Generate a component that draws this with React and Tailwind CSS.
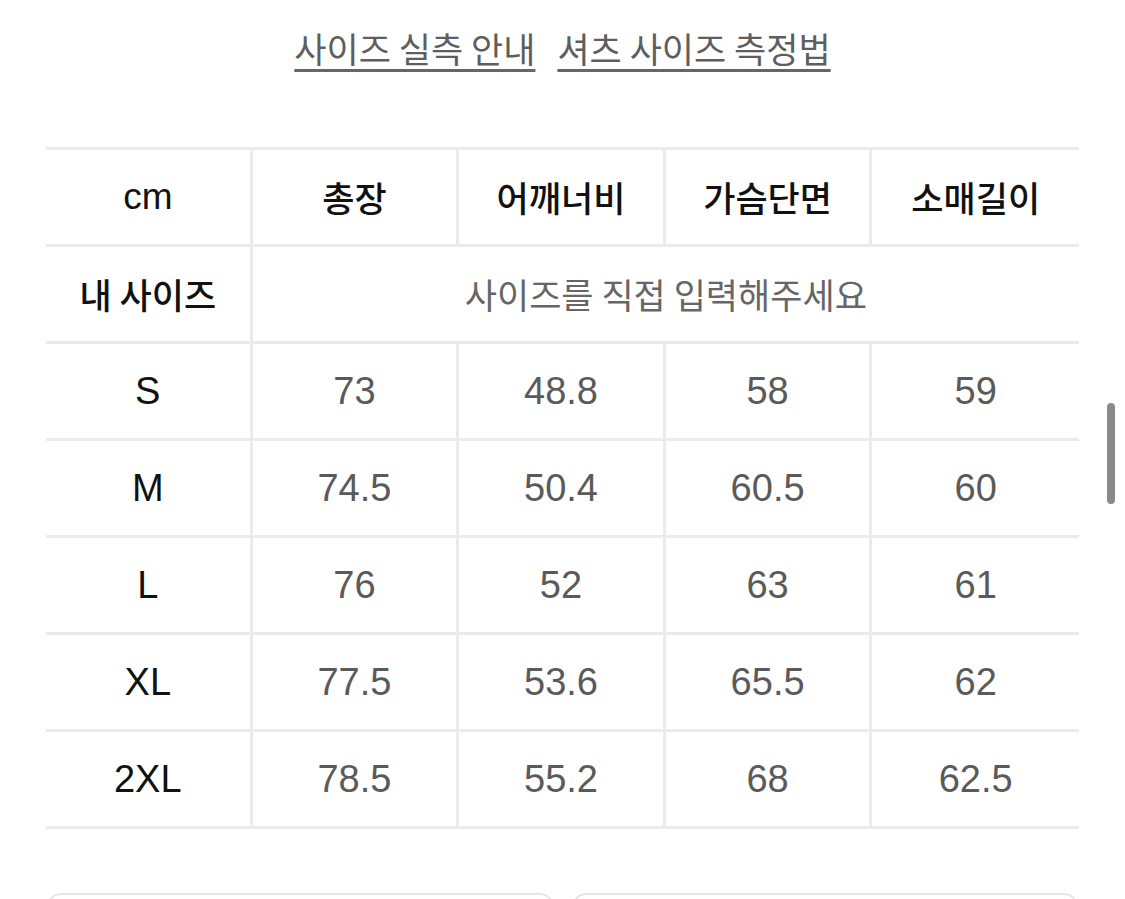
import React from "react";

const KR = { fontFamily: '"Noto Sans CJK KR", "Liberation Sans", sans-serif' };
const LAT = { fontFamily: '"Liberation Sans", "Noto Sans CJK KR", sans-serif' };

const rows = [
  ["S", "73", "48.8", "58", "59"],
  ["M", "74.5", "50.4", "60.5", "60"],
  ["L", "76", "52", "63", "61"],
  ["XL", "77.5", "53.6", "65.5", "62"],
  ["2XL", "78.5", "55.2", "68", "62.5"],
];

const headers = ["총장", "어깨너비", "가슴단면", "소매길이"];

function Cell({ children, last, className = "" }) {
  return (
    <div
      className={`h-[97px] flex items-center justify-center border-b-[3px] border-[#ebebeb] ${
        last ? "" : "border-r-[3px]"
      } ${className}`}
    >
      {children}
    </div>
  );
}

export default function App() {
  return (
    <div className="relative w-[1125px] h-[899px] overflow-hidden bg-white">
      <div className="flex justify-center gap-[22px] pt-[27px]" style={KR}>
        <span className="text-[35px] leading-[42px] text-[#5e5e5e] underline decoration-[3px] underline-offset-[6px] decoration-[#666]">
          사이즈 실측 안내
        </span>
        <span className="text-[35px] leading-[42px] text-[#5e5e5e] underline decoration-[3px] underline-offset-[6px] decoration-[#666]">
          셔츠 사이즈 측정법
        </span>
      </div>

      <div className="mx-[46px] mt-[78px] border-t-[3px] border-[#ebebeb] grid grid-cols-5">
        <Cell>
          <span className="text-[37px] text-[#111]" style={LAT}>cm</span>
        </Cell>
        {headers.map((h, i) => (
          <Cell key={h} last={i === 3}>
            <span className="text-[35px] font-medium text-[#111]" style={KR}>{h}</span>
          </Cell>
        ))}

        <Cell>
          <span className="text-[35px] font-medium text-[#111]" style={KR}>내 사이즈</span>
        </Cell>
        <Cell last className="col-span-4">
          <span className="text-[35px] text-[#666]" style={KR}>사이즈를 직접 입력해주세요</span>
        </Cell>

        {rows.map((r) =>
          r.map((v, i) => (
            <Cell key={r[0] + i} last={i === 4}>
              <span
                className={`text-[38px] ${i === 0 ? "text-[#111]" : "text-[#5a5a5a]"}`}
                style={LAT}
              >
                {v}
              </span>
            </Cell>
          ))
        )}
      </div>

      <div className="mx-[47px] mt-[64px] flex gap-[18px]">
        <div className="flex-1 h-[60px] rounded-[14px] border-2 border-[#e6e6e6]" />
        <div className="flex-1 h-[60px] rounded-[14px] border-2 border-[#e6e6e6]" />
      </div>

      <div className="absolute left-[1107px] top-[403px] w-[8px] h-[101px] rounded-full bg-[#8a8a8a]" />
    </div>
  );
}
